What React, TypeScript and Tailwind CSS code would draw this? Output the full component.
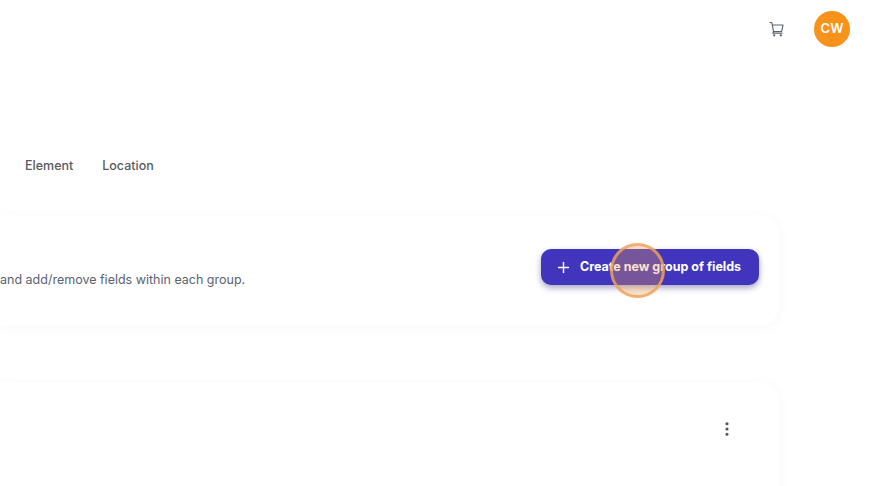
import { Plus, MoreVertical } from "lucide-react";

function CartIcon() {
  return (
    <svg viewBox="0 0 16 16" fill="none" className="mr-[29px] h-4 w-4 text-[#5b6270]" stroke="currentColor" strokeWidth="1.2" strokeLinecap="round" strokeLinejoin="round">
      <path d="M1 1.5h1.8l1.7 9h8.2l1.3-6.5H3.3" />
      <path d="M4.5 10.5 4 12.2h9" />
      <circle cx="5.2" cy="14.3" r="0.55" fill="currentColor" />
      <circle cx="11.8" cy="14.3" r="0.55" fill="currentColor" />
    </svg>
  );
}

export default function App() {
  return (
    <div className="h-[486px] w-[872px] overflow-hidden bg-white font-['Inter',sans-serif]">
      <header className="flex h-[58px] items-center justify-end pr-[22px]">
        <CartIcon />
        <div className="flex h-9 w-9 items-center justify-center rounded-full bg-[#f7931a] text-[13px] font-semibold text-white">
          CW
        </div>
      </header>

      <nav className="mt-[98px] flex h-5 items-center gap-[29px] pl-[25px] text-[12.5px] font-medium text-[#5a5a62]">
        <span>Element</span>
        <span>Location</span>
      </nav>

      <main className="mt-[39px] w-[779px]">
        <section className="flex h-[111px] items-start justify-between rounded-r-[20px] bg-white pr-5 pt-[34px] shadow-[0_2px_14px_rgba(0,0,0,0.035)]">
          <p className="mt-[22px] text-[12.5px] text-[#5b6270]">and add/remove fields within each group.</p>
          <div className="relative">
            <button className="flex h-9 w-[218px] items-center gap-2 rounded-[10px] bg-[#4135bd] pl-[14px] text-[12.5px] font-bold text-white shadow-[0_3px_6px_rgba(40,30,110,0.4)]">
              <Plus className="h-[17px] w-[17px]" strokeWidth={2} />
              Create new group of fields
            </button>
            <div className="absolute left-[69px] top-[-6px] h-[55px] w-[55px] rounded-full border-[3px] border-[#eea35c]/80 bg-[#f59e4a]/30" />
          </div>
        </section>

        <section className="mt-14 flex h-[130px] items-start justify-end rounded-tr-[20px] bg-white pr-[43px] pt-[38px] shadow-[0_2px_14px_rgba(0,0,0,0.035)]">
          <MoreVertical className="h-[18px] w-[18px] text-[#52525b]" strokeWidth={2.2} />
        </section>
      </main>
    </div>
  );
}
